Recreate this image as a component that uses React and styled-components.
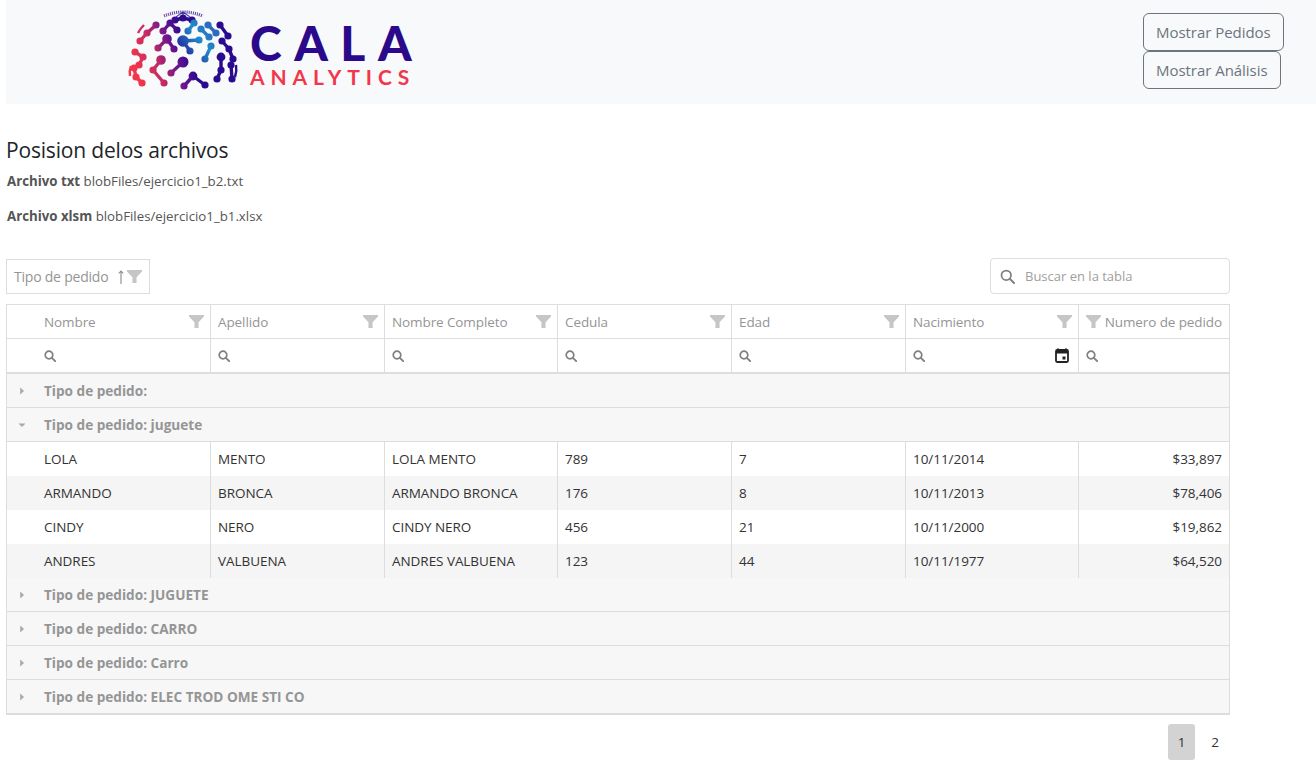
import React from 'react';
import styled, { createGlobalStyle } from 'styled-components';

const FONT = '"Open Sans", "Noto Sans", sans-serif';
const COLS = '204px 174px 173px 174px 174px 173px 151px';

const Global = createGlobalStyle`
  html, body { margin: 0; padding: 0; background: #fff; }
  body { font-family: ${FONT}; color: #212529; overflow: hidden; }
  * { box-sizing: border-box; }
`;
const Page = styled.div`
  width: 1316px; height: 778px; padding-left: 6px; overflow: hidden;
`;
const Header = styled.header`
  height: 104px; background: #f8f9fa; display: flex; justify-content: space-between;
  padding: 0 32px 0 119px;
`;
const Logo = styled.div`
  display: flex; align-items: flex-start; gap: 10px; padding-top: 5px;
`;
const Wordmark = styled.div`
  display: flex; flex-direction: column; padding-top: 15px;
`;
const Cala = styled.span`
  font-family: "Lato", sans-serif; font-weight: 900; font-size: 48px; line-height: 46px;
  letter-spacing: 12.5px; color: #2a0a8a; white-space: nowrap;
`;
const Analytics = styled.span`
  font-family: "Lato", sans-serif; font-weight: 700; font-size: 21px; line-height: 22px;
  letter-spacing: 5.9px; color: #f2364b; white-space: nowrap;
`;
const Actions = styled.div`
  display: flex; flex-direction: column; align-items: flex-start; padding-top: 13px; width: 141px;
`;
const OutlineButton = styled.button`
  font-family: ${FONT}; font-size: 15px; color: #6c757d; background: transparent;
  border: 1px solid #6c757d; border-radius: 6px; padding: 0 12px; height: 38px; white-space: nowrap;
  letter-spacing: -0.04px;
`;
const Title = styled.h2`
  margin: 32px 0 0; font-weight: 400; font-size: 21px; line-height: 28px; color: #212529;
  letter-spacing: -0.18px;
`;
const FileLine = styled.p`
  margin: 0 0 14px 1px; font-size: 13.25px; line-height: 21px; color: #555; height: 21px;
  b { font-weight: 700; }
`;
const FileBlock = styled.div`
  margin-top: 7px;
`;
const Toolbar = styled.div`
  display: flex; justify-content: space-between; align-items: center;
  width: 1224px; margin-top: 31px; height: 36px;
`;
const GroupChip = styled.div`
  width: 144px; height: 35px; border: 1px solid #ddd; display: flex; align-items: center;
  padding-left: 7px; font-size: 14px; color: #959595; letter-spacing: -0.22px; margin-top: 1px;
`;
const ChipIcons = styled.span`
  display: inline-flex; align-items: center; gap: 3px; margin-left: 10px; color: #959595;
`;
const SearchBox = styled.div`
  width: 240px; height: 36px; border: 1px solid #ddd; border-radius: 4px; display: flex; align-items: center;
  padding-left: 9px; gap: 10px; font-size: 13px; color: #a0a0a0; letter-spacing: 0;
`;
const Grid = styled.div`
  width: 1224px; margin-top: 10px; border-left: 1px solid #ddd; border-top: 1px solid #ddd;
`;
const Row = styled.div`
  display: grid; grid-template-columns: ${COLS}; height: ${p => p.$h || 34}px;
  background: ${p => (p.$alt ? '#f5f5f5' : '#fff')};
`;
const HeadCell = styled.div`
  display: flex; align-items: center; justify-content: space-between; gap: 2px;
  border-right: 1px solid #ddd; border-bottom: 1px solid #ddd;
  padding: 0 6px 0 ${p => (p.$first ? 37 : 7)}px; font-size: 13.5px; color: #959595; letter-spacing: -0.1px;
  white-space: nowrap; overflow: hidden;
  &:last-child { padding-right: 7px; padding-left: 7px; }
`;
const FilterCell = styled.div`
  display: flex; align-items: center; justify-content: space-between;
  border-right: 1px solid #ddd; border-bottom: 2px solid #ddd;
  padding: 0 9px 0 ${p => (p.$first ? 37 : 7)}px;
`;
const Cell = styled.div`
  display: flex; align-items: center; justify-content: ${p => (p.$right ? 'flex-end' : 'flex-start')};
  border-right: 1px solid #ddd;
  padding: 0 7px 0 ${p => (p.$first ? 37 : 7)}px; font-size: 13.5px; color: #333; letter-spacing: -0.05px;
  white-space: nowrap;
`;
const GroupRow = styled.div`
  height: ${p => (p.$last ? 35 : 34)}px; background: #f7f7f7; border-right: 1px solid #ddd;
  border-bottom: ${p => (p.$last ? 2 : 1)}px solid #ddd;
  display: flex; align-items: center; font-size: 13.6px; font-weight: 700; color: #959595;
`;
const Arrow = styled.span`
  width: 37px; display: flex; justify-content: center; padding-right: 7px;
`;
const Pager = styled.nav`
  width: 1224px; display: flex; justify-content: flex-end; gap: 5px; margin-top: 9px;
`;
const PageBtn = styled.div`
  width: ${p => (p.$active ? 27 : 30)}px; height: 36px; display: flex; align-items: center; justify-content: center;
  border-radius: 3px; font-size: 13.5px; color: #333; background: ${p => (p.$active ? '#d3d3d3' : 'transparent')};
`;

const Funnel = ({ size = 15 }) => (
  <svg width={size} height={size * 0.9} viewBox="0 0 16 14.4" style={{ flex: 'none' }}>
    <path d="M0 0H16V1.6L10.2 7.6V14.4H5.8V7.6L0 1.6Z" fill="#c6c6c6" />
  </svg>
);
const Search = ({ size = 12, color = '#808080', w = 1.7 }) => (
  <svg width={size} height={size} viewBox="0 0 12 12" style={{ flex: 'none' }}>
    <circle cx="5" cy="5" r="3.8" fill="none" stroke={color} strokeWidth={w} />
    <path d="M7.8 7.8L11.2 11.2" stroke={color} strokeWidth={w + 0.2} strokeLinecap="round" />
  </svg>
);
const Calendar = () => (
  <svg width="14" height="15" viewBox="0 0 14 15" style={{ flex: 'none' }}>
    <path d="M3 0.5V2.5M11 0.5V2.5" stroke="#222" strokeWidth="2" />
    <rect x="1" y="2" width="12" height="12" rx="1.2" fill="none" stroke="#222" strokeWidth="1.8" />
    <rect x="1" y="2" width="12" height="3.5" fill="#222" />
    <rect x="7.5" y="8.5" width="3" height="3" fill="#222" />
  </svg>
);
const UpArrow = () => (
  <svg width="6" height="14" viewBox="0 0 6 14"><path d="M3 14V1M0.7 3.5L3 1L5.3 3.5" fill="none" stroke="#8a8a8a" strokeWidth="1.1" /></svg>
);
const Caret = ({ open }) => (
  <svg width="8" height="8" viewBox="0 0 8 8">
    {open ? <path d="M0.5 2.5H7.5L4 6Z" fill="#a8a8a8" /> : <path d="M2.2 0.5L6 4L2.2 7.5Z" fill="#a8a8a8" />}
  </svg>
);

const warm = [
  [[33, 43], [42, 34], [49, 44]],
  [[15, 36], [22, 28], [31, 20]],
  [[38, 26], [45, 18], [52, 25]],
  [[50, 15], [58, 13], [67, 15]],
  [[97, 36], [104, 44], [108, 54]],
  [[95, 20], [103, 31]],
  [[58, 57], [46, 68]],
  [[36, 55], [28, 65], [39, 78]],
  [[10, 47], [18, 52], [14, 60]],
  [[9, 63], [11, 72], [17, 78]],
  [[59, 81], [68, 71], [80, 80]],
  [[96, 52], [96, 65], [92, 74]],
  [[106, 60], [107, 74]],
];
const blue = [
  [[58, 36], [74, 35]],
  [[58, 36], [65, 46]],
  [[63, 26], [69, 18]],
  [[76, 24], [84, 32]],
  [[83, 20], [91, 28]],
  [[80, 54], [86, 41]],
];
const bigWarm = [[58, 57, 5.5], [36, 55, 4.8], [42, 34, 4.8], [96, 52, 4.4], [68, 71, 4.4]];

const Branch = ({ pts, paint }) => (
  <g>
    <polyline points={pts.map(p => p.join(',')).join(' ')} fill="none" stroke={paint} strokeWidth="3.4" strokeLinejoin="round" />
    {pts.map((p, j) => <circle key={j} cx={p[0]} cy={p[1]} r="3.6" fill={paint} />)}
  </g>
);
const Globe = () => (
  <svg width="115" height="90" viewBox="0 0 115 90" style={{ flex: 'none' }}>
    <defs>
      <linearGradient id="warm" gradientUnits="userSpaceOnUse" x1="5" y1="55" x2="80" y2="30">
        <stop offset="0" stopColor="#f4364a" />
        <stop offset="0.3" stopColor="#c72c62" />
        <stop offset="0.55" stopColor="#6a1390" />
        <stop offset="0.75" stopColor="#2a0a8e" />
        <stop offset="1" stopColor="#2a0a8e" />
      </linearGradient>
      <linearGradient id="cool" gradientUnits="userSpaceOnUse" x1="50" y1="50" x2="84" y2="24">
        <stop offset="0" stopColor="#2a0a8e" />
        <stop offset="0.7" stopColor="#1f8ccb" />
        <stop offset="1" stopColor="#2c6cc0" />
      </linearGradient>
    </defs>
    {warm.map((b, i) => <Branch key={i} pts={b} paint="url(#warm)" />)}
    {blue.map((b, i) => <Branch key={i} pts={b} paint="url(#cool)" />)}
    <circle cx="58" cy="36" r="5.8" fill="url(#cool)" />
    {bigWarm.map((c, i) => <circle key={i} cx={c[0]} cy={c[1]} r={c[2]} fill="url(#warm)" />)}
    <g fill="none" stroke="url(#warm)">
      <path d="M5 71Q4 66 6 61" strokeWidth="2.4" />
      <path d="M13 28Q15 24 19 20" strokeWidth="2.4" />
      <path d="M111 60Q112 66 110 72" strokeWidth="2.4" />
      <path d="M39 11Q58 3 78 11" strokeWidth="3.2" strokeDasharray="1.1 1" opacity="0.75" />
      <path d="M58 7L51 12M58 7V12M58 7L65 12" strokeWidth="1.2" opacity="0.75" />
    </g>
  </svg>
);

const columns = ['Nombre', 'Apellido', 'Nombre Completo', 'Cedula', 'Edad', 'Nacimiento'];
const rows = [
  ['LOLA', 'MENTO', 'LOLA MENTO', '789', '7', '10/11/2014', '$33,897'],
  ['ARMANDO', 'BRONCA', 'ARMANDO BRONCA', '176', '8', '10/11/2013', '$78,406'],
  ['CINDY', 'NERO', 'CINDY NERO', '456', '21', '10/11/2000', '$19,862'],
  ['ANDRES', 'VALBUENA', 'ANDRES VALBUENA', '123', '44', '10/11/1977', '$64,520'],
];
const Group = ({ label, open, last }) => (
  <GroupRow $last={last}><Arrow><Caret open={open} /></Arrow>{label}</GroupRow>
);

export default function App() {
  return (
    <Page>
      <Global />
      <Header>
        <Logo>
          <Globe />
          <Wordmark>
            <Cala>CALA</Cala>
            <Analytics>ANALYTICS</Analytics>
          </Wordmark>
        </Logo>
        <Actions>
          <OutlineButton>Mostrar Pedidos</OutlineButton>
          <OutlineButton>Mostrar Análisis</OutlineButton>
        </Actions>
      </Header>
      <Title>Posision delos archivos</Title>
      <FileBlock>
        <FileLine><b>Archivo txt</b> blobFiles/ejercicio1_b2.txt</FileLine>
        <FileLine><b>Archivo xlsm</b> blobFiles/ejercicio1_b1.xlsx</FileLine>
      </FileBlock>
      <Toolbar>
        <GroupChip>Tipo de pedido<ChipIcons><UpArrow /><Funnel /></ChipIcons></GroupChip>
        <SearchBox><Search size={15} w={1.4} />Buscar en la tabla</SearchBox>
      </Toolbar>
      <Grid>
        <Row>
          {columns.map((c, i) => <HeadCell key={c} $first={i === 0}>{c}<Funnel /></HeadCell>)}
          <HeadCell><Funnel />Numero de pedido</HeadCell>
        </Row>
        <Row $h={35}>
          {columns.map((c, i) => (
            <FilterCell key={c} $first={i === 0}><Search />{c === 'Nacimiento' && <Calendar />}</FilterCell>
          ))}
          <FilterCell><Search /></FilterCell>
        </Row>
        <Group label="Tipo de pedido:" />
        <Group label="Tipo de pedido: juguete" open />
        {rows.map((r, i) => (
          <Row key={r[0]} $alt={i % 2 === 1}>
            {r.map((v, j) => <Cell key={j} $first={j === 0} $right={j === 6}>{v}</Cell>)}
          </Row>
        ))}
        <Group label="Tipo de pedido: JUGUETE" />
        <Group label="Tipo de pedido: CARRO" />
        <Group label="Tipo de pedido: Carro" />
        <Group label="Tipo de pedido: ELEC TROD OME STI CO" last />
      </Grid>
      <Pager>
        <PageBtn $active>1</PageBtn>
        <PageBtn>2</PageBtn>
      </Pager>
    </Page>
  );
}
